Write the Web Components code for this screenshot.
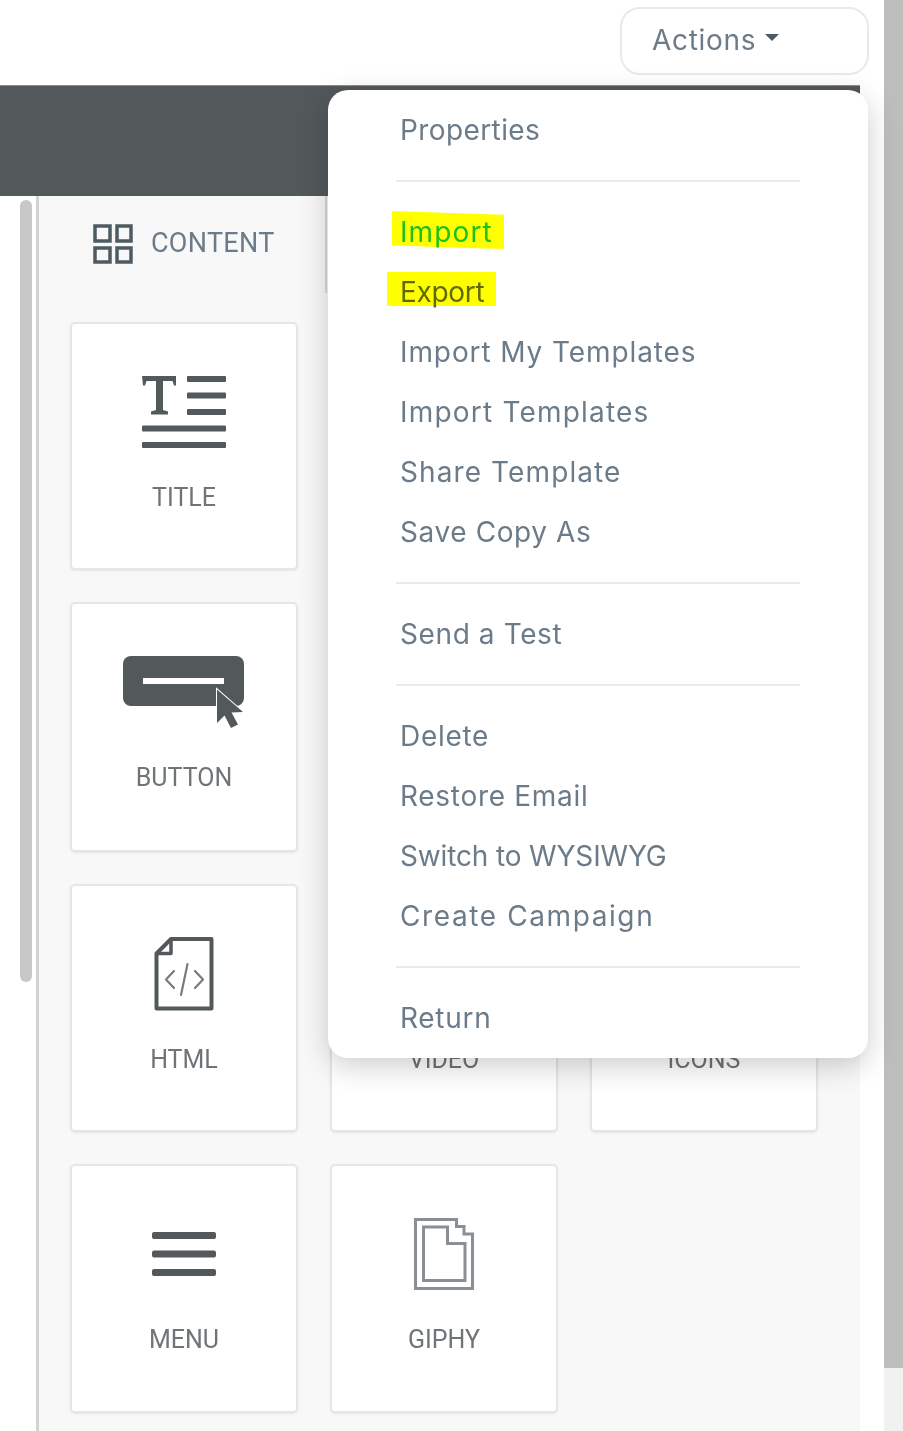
<!DOCTYPE html>
<html lang="en">
<head>
<meta charset="utf-8">
<title>Email editor</title>
<style>
  html, body { margin: 0; height: 100%; background: #fff; overflow: hidden; }
</style>
</head>
<body>
<editor-page>
  <actions-button slot="header">Actions</actions-button>
  <actions-menu slot="menu">
    <menu-item style="letter-spacing:.4px">Properties</menu-item>
    <menu-rule></menu-rule>
    <menu-item mark="import" style="letter-spacing:1.1px">Import</menu-item>
    <menu-item mark="export" style="letter-spacing:-.3px">Export</menu-item>
    <menu-item style="letter-spacing:.9px">Import My Templates</menu-item>
    <menu-item style="letter-spacing:1.2px">Import Templates</menu-item>
    <menu-item style="letter-spacing:1.1px">Share Template</menu-item>
    <menu-item style="letter-spacing:.6px">Save Copy As</menu-item>
    <menu-rule></menu-rule>
    <menu-item style="letter-spacing:.6px">Send a Test</menu-item>
    <menu-rule></menu-rule>
    <menu-item style="letter-spacing:.7px">Delete</menu-item>
    <menu-item style="letter-spacing:.7px">Restore Email</menu-item>
    <menu-item style="letter-spacing:-.15px">Switch to WYSIWYG</menu-item>
    <menu-item style="letter-spacing:1.6px">Create Campaign</menu-item>
    <menu-rule></menu-rule>
    <menu-item style="letter-spacing:.7px">Return</menu-item>
  </actions-menu>
  <content-panel>
    <block-card label="TITLE">
      <svg width="84" height="72" viewBox="0 0 84 72" fill="#53585b">
        <path d="M0 0h34v9.500h-2l-1.500-4.500h-9.500v29l5 1.500v3h-17v-3l5-1.500v-29h-9.500l-1.500 4.500h-2z"/>
        <rect x="45" y="0" width="39" height="6" rx="1"/>
        <rect x="45" y="16.500" width="39" height="6" rx="1"/>
        <rect x="45" y="33" width="39" height="6" rx="1"/>
        <rect x="0" y="49.500" width="84" height="6" rx="1"/>
        <rect x="0" y="66" width="84" height="6" rx="1"/>
      </svg>
    </block-card>
    <block-card></block-card>
    <block-card></block-card>
    <block-card label="BUTTON">
      <svg width="122" height="72" viewBox="0 0 122 72">
        <rect x="0" y="0" width="121" height="50" rx="8" fill="#53585b"/>
        <rect x="20" y="22" width="81" height="6" fill="#fff"/>
        <path d="M94 33.500V67l7.500-7.500 6.500 12.500 7-3.500-6.500-12 11.500-.5z" fill="#53585b" stroke="#fff" stroke-width="2" paint-order="stroke"/>
      </svg>
    </block-card>
    <block-card></block-card>
    <block-card></block-card>
    <block-card label="HTML">
      <svg width="60" height="74" viewBox="0 0 60 74" fill="none" stroke="#53585b">
        <path d="M17 2H57.500V71.500H2.500V16.500z" stroke-width="4" stroke-linejoin="round"/>
        <path d="M17 2V16.500H2.500" stroke-width="3.500" stroke-linejoin="round"/>
        <path d="M20 34l-8 8.500 8 8.500M41 34l8 8.500-8 8.500M33.500 27l-6.500 31" stroke="#777c80" stroke-width="2.200" stroke-linecap="round" stroke-linejoin="round"/>
      </svg>
    </block-card>
    <block-card label="VIDEO"></block-card>
    <block-card label="ICONS"></block-card>
    <block-card label="MENU">
      <svg width="64" height="44" viewBox="0 0 64 44" fill="#53585b">
        <rect x="0" y="0" width="64" height="7" rx="2"/>
        <rect x="0" y="18.500" width="64" height="7" rx="2"/>
        <rect x="0" y="37" width="64" height="7" rx="2"/>
      </svg>
    </block-card>
    <block-card label="GIPHY">
      <svg width="60" height="72" viewBox="0 0 60 72" fill="none" stroke="#8a8f93" stroke-width="3">
        <path d="M1.500 1.500H42.500V8.500H50V16H58.500V70.500H1.500z"/>
        <path d="M9.500 9H33.500V25.500H51V62.500H9.500z"/>
      </svg>
    </block-card>
  </content-panel>
</editor-page>

<script>
function shadow(el, html) {
  el.attachShadow({ mode: 'open' }).innerHTML = html;
}

class EditorPage extends HTMLElement {
  constructor() {
    super();
    shadow(this, `
      <style>
        :host { display: flex; width: 903px; height: 1431px; overflow: hidden; position: relative; filter: blur(.6px); }
        .main { width: 884px; position: relative; display: flex; flex-direction: column; }
        header { height: 85px; display: flex; justify-content: flex-end; align-items: flex-start; padding: 7px 15px 0 0; box-sizing: border-box; flex: none; }
        .bar { height: 111px; width: 860px; flex: none; background: #53585b; border-top: 1px solid #8b8f91; box-sizing: border-box; }
        .body { display: flex; flex: 1; width: 860px; min-height: 0; }
        .rail { width: 36px; flex: none; padding: 4px 4px 0 20px; box-sizing: border-box; }
        .thumb { width: 12px; height: 782px; border-radius: 6px; background: #c8c8c8; }
        .track { width: 19px; flex: none; background: #f1f1f1; }
        .track div { height: 1368px; background: #bdbdbd; }
        ::slotted([slot=menu]) { position: absolute; left: 328px; top: 90px; }
      </style>
      <div class="main">
        <header><slot name="header"></slot></header>
        <div class="bar"></div>
        <div class="body">
          <div class="rail"><div class="thumb"></div></div>
          <slot></slot>
        </div>
        <slot name="menu"></slot>
      </div>
      <div class="track"><div></div></div>`);
  }
}
customElements.define('editor-page', EditorPage);

class ActionsButton extends HTMLElement {
  constructor() {
    super();
    shadow(this, `
      <style>
        :host { display: flex; align-items: center; box-sizing: border-box; width: 249px; height: 68px; padding: 0 0 2px 30px;
          border: 2px solid #e9e9e9; border-radius: 20px; background: #fff; letter-spacing: .7px;
          font: 28px/1 Inter, "Liberation Sans", sans-serif; color: #6b7b89; }
        i { width: 0; height: 0; margin: 0 0 6px 9px; border: 7px solid transparent; border-top: 7px solid #4f5b62; border-bottom: 0; }
      </style>
      <slot></slot><i></i>`);
  }
}
customElements.define('actions-button', ActionsButton);

class ActionsMenu extends HTMLElement {
  constructor() {
    super();
    shadow(this, `
      <style>
        :host { display: block; box-sizing: border-box; width: 540px; height: 968px; padding: 10px 0; overflow: hidden;
          background: #fff; border-radius: 20px; box-shadow: 0 8px 30px rgba(0,0,0,.2); }
      </style>
      <slot></slot>`);
  }
}
customElements.define('actions-menu', ActionsMenu);

class MenuItem extends HTMLElement {
  constructor() {
    super();
    shadow(this, `
      <style>
        :host { display: flex; align-items: center; height: 60px; padding-left: 72px;
          font: 28px/1 Inter, "Liberation Sans", sans-serif; color: #6b7b89; }
        span { position: relative; }
        :host([mark]) span::before { content: ""; position: absolute; z-index: -1; background: #ff0; }
        :host([mark=import]) { color: #1cc11c; }
        :host([mark=import]) span::before { left: -8px; top: -7px; width: 112px; height: 38px; clip-path: polygon(0 0, 40% 4%, 100% 10%, 100% 100%, 50% 96%, 0 90%); }
        :host([mark=export]) { color: #5f6a00; }
        :host([mark=export]) span::before { left: -13px; top: -6px; width: 109px; height: 34px; }
        :host([mark]) span { z-index: 0; }
      </style>
      <span><slot></slot></span>`);
  }
}
customElements.define('menu-item', MenuItem);

class MenuRule extends HTMLElement {
  constructor() {
    super();
    shadow(this, `
      <style>
        :host { display: block; height: 2px; margin: 20px 68px 20px; background: #e9ecef; }
      </style>`);
  }
}
customElements.define('menu-rule', MenuRule);

class ContentPanel extends HTMLElement {
  constructor() {
    super();
    shadow(this, `
      <style>
        :host { display: block; box-sizing: border-box; flex: 1; background: #f8f8f8; border-left: 3px solid #d2d2d2; }
        .tab { box-sizing: border-box; width: 288px; height: 97px; display: flex; align-items: center; gap: 18px; padding: 0 0 2px 54px;
          border-right: 2px solid #d8d8d8; font: 27px/1 Roboto, "Liberation Sans", sans-serif; letter-spacing: .3px; color: #6b7b89; }
        .grid { display: grid; grid-template-columns: repeat(3, 228px); grid-template-rows: 248px 250px 248px 249px; gap: 32px; padding: 29px 0 0 31px; }
      </style>
      <div class="tab">
        <svg width="40" height="40" viewBox="0 0 40 40" fill="none" stroke="#4f5b62" stroke-width="3.500">
          <rect x="2" y="2" width="15" height="15"/><rect x="24" y="2" width="14" height="15"/>
          <rect x="2" y="24" width="15" height="14"/><rect x="24" y="24" width="14" height="14"/>
        </svg>
        <span>CONTENT</span>
      </div>
      <div class="grid"><slot></slot></div>`);
  }
}
customElements.define('content-panel', ContentPanel);

class BlockCard extends HTMLElement {
  constructor() {
    super();
    shadow(this, `
      <style>
        :host { display: block; box-sizing: border-box; padding-top: 38px; background: #fff; border: 2px solid #e6e6e6; border-radius: 5px;
          box-shadow: 0 1px 2px rgba(0,0,0,.08); text-align: center; }
        .icon { height: 100px; display: flex; align-items: center; justify-content: center; }
        .label { margin-top: 21px; font: 25px/30px Roboto, "Liberation Sans", sans-serif; color: #6f7477; }
      </style>
      <div class="icon"><slot></slot></div>
      <div class="label"></div>`);
    this.shadowRoot.querySelector('.label').textContent = this.getAttribute('label') || '';
  }
}
customElements.define('block-card', BlockCard);
</script>
</body>
</html>
